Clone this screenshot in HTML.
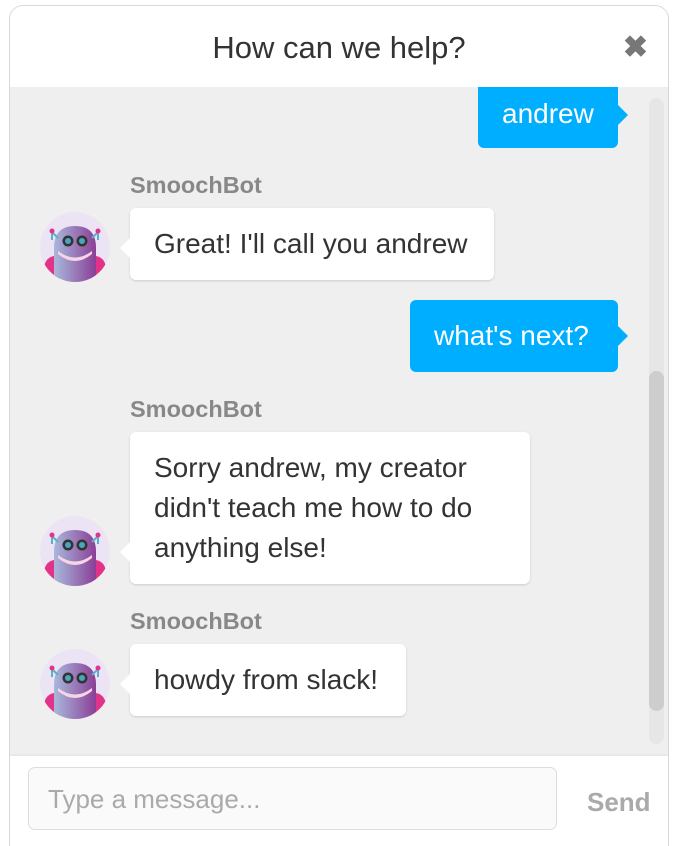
<!DOCTYPE html>
<html style="height:846px;overflow:hidden"><head><style>
body{margin:0;width:674px;height:846px;background:#fff;font-family:"Liberation Sans",Helvetica,Arial,sans-serif;position:relative;overflow:hidden}
.frame{position:absolute;left:9px;top:5px;width:660px;height:841px;border:1px solid #d8d8d8;border-bottom:none;border-radius:14px 14px 0 0;overflow:hidden;background:#efefef;box-sizing:border-box}
.hdr{position:absolute;left:0;top:0;width:100%;height:81px;background:#fff;text-align:center;font-size:31px;color:#333;line-height:84px}
.x{position:absolute;right:20px;top:27px;font-size:30px;color:#777;font-weight:bold;line-height:30px}
.ft{position:absolute;left:0;top:750px;width:100%;height:91px;background:#fff;box-shadow:0 -1px 2px rgba(0,0,0,.06)}
.inp{position:absolute;left:18px;top:11px;width:529px;height:63px;border:1px solid #ddd;border-radius:7px;background:#fafafa;color:#aaa;font-size:26px;line-height:63px;padding-left:19px;box-sizing:border-box}
.send{position:absolute;left:577px;top:31px;color:#aaa;font-weight:bold;font-size:26px}
.b{position:absolute;border-radius:6px;font-size:28px;line-height:40px;box-sizing:border-box;padding:16px 24px}
.u{background:#00aeff;color:#fff}
.u:after{content:"";position:absolute;right:-10px;top:50%;margin-top:-10px;border-left:10px solid #00aeff;border-top:10px solid transparent;border-bottom:10px solid transparent}
.bot{background:#fff;color:#333;box-shadow:0 1px 2px rgba(0,0,0,.15)}
.bot:before{content:"";position:absolute;left:-10px;bottom:22px;border-right:10px solid #fff;border-top:10px solid transparent;border-bottom:10px solid transparent}
.n{position:absolute;left:120px;font-size:23.5px;font-weight:bold;color:#888}
.av{position:absolute;left:30px;width:70px;height:70px}
.track{position:absolute;left:639px;top:92px;width:15px;height:646px;background:#e6e6e6;border-radius:8px}
.thumb{position:absolute;left:639px;top:365px;width:15px;height:340px;background:#cdcdcd;border-radius:8px}
</style></head><body>
<div class="frame">
<div class="track"></div><div class="thumb"></div>
<div class="b u" style="left:468px;top:76px;width:140px;height:66px;border-radius:0 0 6px 6px;padding-top:12px">andrew</div>
<div class="n" style="top:166px">SmoochBot</div>
<div class="b bot" style="left:120px;top:202px;width:364px;height:72px">Great! I'll call you andrew</div>
<div class="b u" style="left:400px;top:294px;width:208px;height:72px">what's next?</div>
<div class="n" style="top:390px">SmoochBot</div>
<div class="b bot" style="left:120px;top:426px;width:400px;height:152px">Sorry andrew, my creator didn't teach me how to do anything else!</div>
<div class="n" style="top:602px">SmoochBot</div>
<div class="b bot" style="left:120px;top:638px;width:276px;height:72px">howdy from slack!</div>
<svg class="av" style="top:206px" viewBox="0 0 70 70"><use href="#bot"/></svg>
<svg class="av" style="top:510px" viewBox="0 0 70 70"><use href="#bot"/></svg>
<svg class="av" style="top:643px" viewBox="0 0 70 70"><use href="#bot"/></svg>
<div class="hdr">How can we help?<span class="x">✖</span></div>
<div class="ft"><div class="inp">Type a message...</div><div class="send">Send</div></div>
</div>
<svg width="0" height="0" style="position:absolute;top:0;left:0"><defs>
<linearGradient id="g" x1="0" x2="1"><stop offset="0" stop-color="#a8b8dc"/><stop offset="1" stop-color="#8a3f96"/></linearGradient>
<clipPath id="c"><circle cx="35" cy="35" r="35"/></clipPath>
<g id="bot" clip-path="url(#c)">
<circle cx="35" cy="35" r="35" fill="#ece4f4"/>
<path d="M4 58 Q4 46 14 44 L20 48 L20 70 L4 70Z" fill="#e2338a"/>
<path d="M66 58 Q66 46 56 44 L50 48 L50 70 L66 70Z" fill="#e2338a"/>
<path d="M14 70 L14 36 Q14 14 35 14 Q56 14 56 36 L56 70Z" fill="url(#g)"/>
<path d="M12 28 L12 20 M12 20 L18 26 M58 28 L58 20 M58 20 L52 26" stroke="#5ab0c8" stroke-width="2" fill="none"/>
<circle cx="12" cy="19" r="2.5" fill="#e2338a"/><circle cx="58" cy="19" r="2.5" fill="#e2338a"/>
<circle cx="28" cy="29" r="5.5" fill="#333"/><circle cx="42" cy="29" r="5.5" fill="#333"/>
<circle cx="28" cy="29" r="3" fill="#4aa6c0"/><circle cx="42" cy="29" r="3" fill="#4aa6c0"/>
<path d="M18 39 Q35 52 52 39 L52 42 Q35 56 18 42Z" fill="#f6d6e6"/>
</g></defs></svg>
</body></html>
